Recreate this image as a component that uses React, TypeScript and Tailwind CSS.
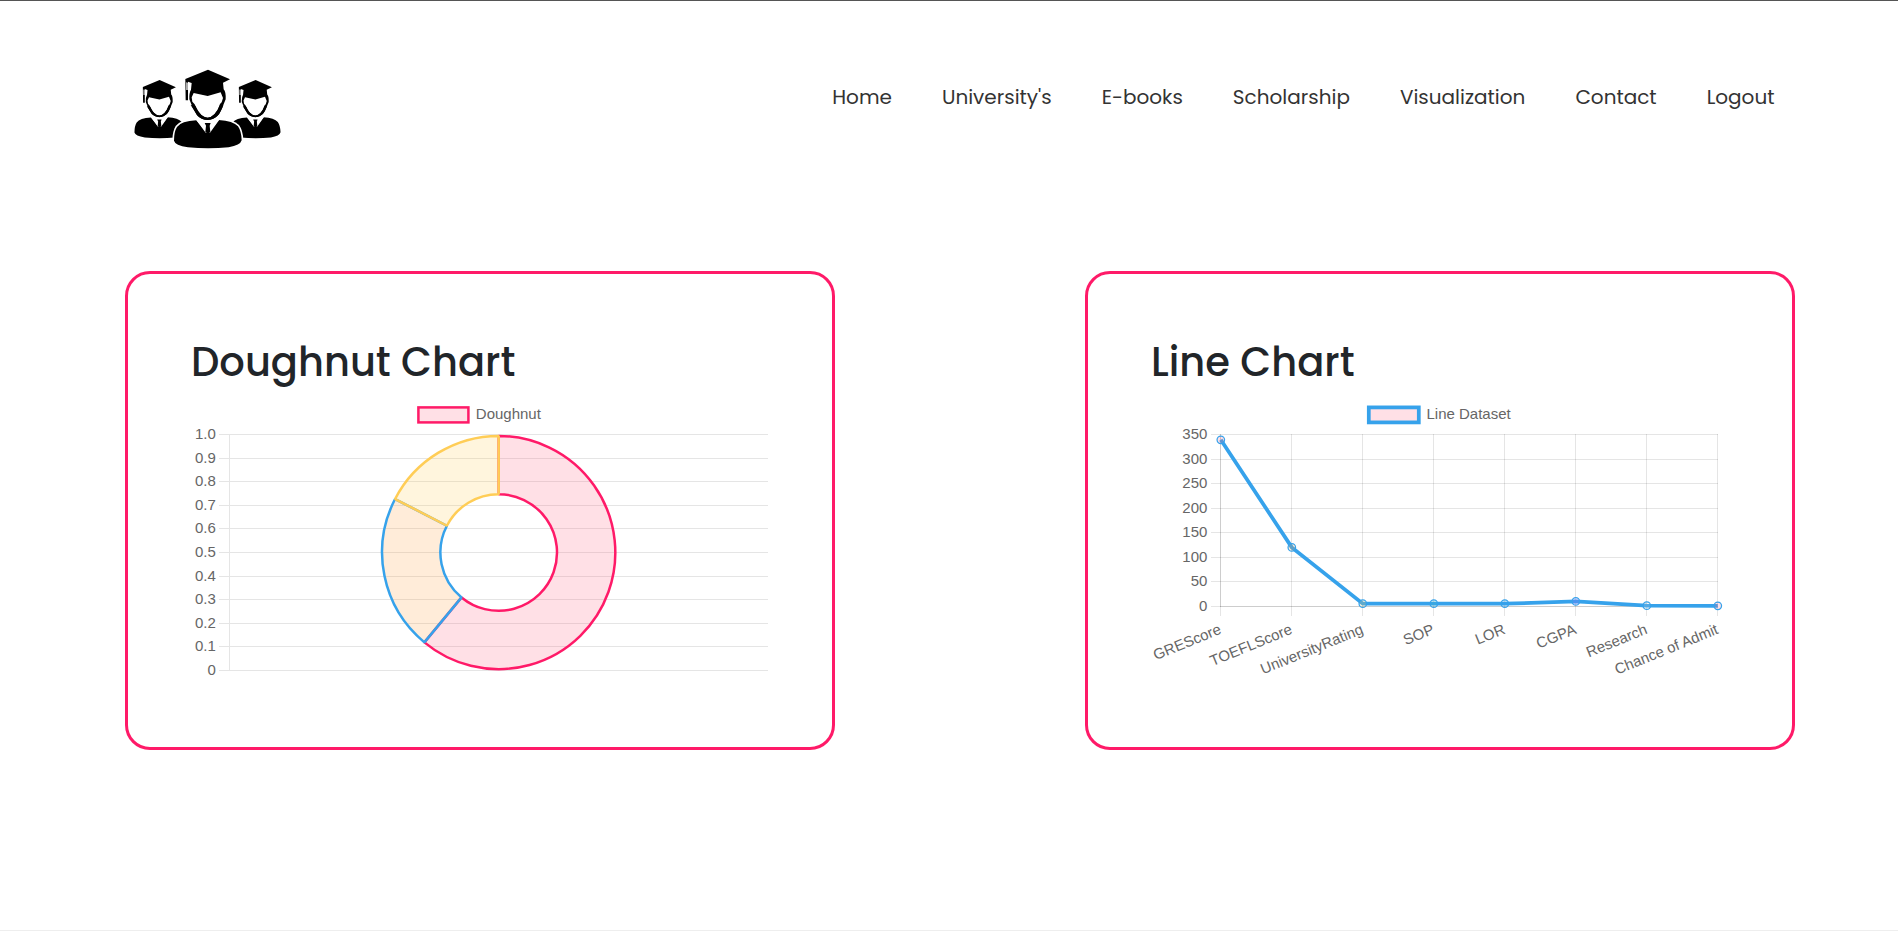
import type { ReactNode } from "react";

const NAV = ["Home", "University's", "E-books", "Scholarship", "Visualization", "Contact", "Logout"];

function Person() {
  return (
    <>
      <path d="M196 72 L264 44 L330 73 L309 83 L311 103 Q318 110 317 133 Q307 160 297 178 Q281 195 263 195 Q245 195 230 179 Q216 157 208 133 Q207 114 213 104 L215 84 L204 80 L204 136 L197 136 Z" />
      <path fill="#fff" d="M221 114 L263 123 L302 112 L309 129 L305 142 L300 147 Q295 166 284 178 Q274 188 263 188 Q249 187 238 175 Q228 162 224 148 L217 140 L215 127 Z M199 82 L203 83 L203 105 L199 105 Z" />
      <path d="M229 196 Q184 198 171 216 Q162 230 162 257 Q165 271 204 277 Q264 283 326 277 Q361 271 365 256 Q364 228 354 214 Q340 198 296 195 L269 231 L271 207 Q272 204 263 204 Q253 204 256 208 L258 231 Z" />
    </>
  );
}

/* Wide shirt opening with a tie, laid over the jacket. */
function Collar() {
  return (
    <>
      <path fill="#fff" d="M229 195 L298 194 L270 233 L257 233 Z" />
      <path d="M212 150 L226 152 Q243 188 263 188 Q284 187 300 150 L310 150 Q303 172 292 183 Q279 195 263 195 Q246 195 233 183 Z" />
      <path d="M254 204 L272 204 L269 212 L271 231 L264 236 L256 231 L258 212 Z" />
    </>
  );
}

function Logo() {
  return (
    <svg width="180" height="105" viewBox="0 0 540 315" className="block" role="img" aria-label="Graduates">
      <g transform="translate(-76.5 42.5) scale(.74)">
        <Person />
        <Collar />
      </g>
      <g transform="translate(211.5 42.5) scale(.74)">
        <Person />
        <Collar />
      </g>
      <path
        fill="#fff"
        d="M224 191 Q180 194 167 213 Q157 230 157 257 Q160 275 204 282 Q264 287 326 282 Q367 275 370 256 Q369 226 357 210 Q340 192 296 191 Z"
      />
      <Person />
      <Collar />
    </svg>
  );
}

function Card({ title, children }: { title: string; children: ReactNode }) {
  return (
    <section className="h-[479px] w-[710px] shrink-0 rounded-[25px] border-[3px] border-[#ff1a68] px-16 pt-16">
      <h2 className="-ml-px h-[62px] whitespace-nowrap text-[40px] leading-[48px] font-medium text-[#212529]">{title}</h2>
      {children}
    </section>
  );
}

const D_ROWS = [434.5, 458.5, 481.5, 505.5, 528.5, 552.5, 576.5, 599.5, 623.5, 646.5, 670.5];
const D_LABELS = ["1.0", "0.9", "0.8", "0.7", "0.6", "0.5", "0.4", "0.3", "0.2", "0.1", "0"];
const CX = 498.7;
const CY = 552.5;

function ring(from: number, to: number) {
  const at = (deg: number, r: number) => {
    const a = (deg * Math.PI) / 180;
    return `${(CX + r * Math.sin(a)).toFixed(2)} ${(CY - r * Math.cos(a)).toFixed(2)}`;
  };
  const large = to - from > 180 ? 1 : 0;
  return `M${at(from, 116.6)} A116.6 116.6 0 ${large} 1 ${at(to, 116.6)} L${at(to, 58.3)} A58.3 58.3 0 ${large} 0 ${at(from, 58.3)} Z`;
}

const SLICES = [
  { from: 0, to: 219.6, fill: "rgba(255,99,132,.2)", stroke: "rgb(255,26,104)" },
  { from: 219.6, to: 297.3, fill: "rgba(255,159,64,.2)", stroke: "rgb(54,162,235)" },
  { from: 297.3, to: 360, fill: "rgba(255,205,86,.2)", stroke: "rgb(255,205,86)" },
];

const CHART_TEXT = "block overflow-visible font-['Liberation_Sans',Arial,sans-serif] text-[15px]";

function DoughnutChart() {
  return (
    <svg width="576" height="288" viewBox="192 400 576 288" className={CHART_TEXT}>
      <rect x="418.4" y="407.4" width="50" height="15" fill="rgba(255,99,132,.2)" stroke="rgb(255,26,104)" strokeWidth="2.5" />
      <text x="475.8" y="419" fill="#666">Doughnut</text>
      <g stroke="#e5e5e5">
        {D_ROWS.map((y) => (
          <path key={y} d={`M219 ${y}H768`} />
        ))}
        <path d="M229.5 434V671" />
      </g>
      <g fill="#666" textAnchor="end">
        {D_ROWS.map((y, i) => (
          <text key={y} x="215.8" y={y + 4.4}>{D_LABELS[i]}</text>
        ))}
      </g>
      {SLICES.map((s) => (
        <path key={s.from} d={ring(s.from, s.to)} fill={s.fill} stroke={s.stroke} strokeWidth="2.5" strokeLinejoin="bevel" />
      ))}
    </svg>
  );
}

const L_ROWS = [434.5, 459.5, 483.5, 508.5, 532.5, 557.5, 581.5, 606.5];
const L_LABELS = ["350", "300", "250", "200", "150", "100", "50", "0"];
const POINTS = [
  { x: 1220.8, y: 439.8, label: "GREScore", fill: "rgba(255,99,132,.2)" },
  { x: 1291.8, y: 547.4, label: "TOEFLScore", fill: "rgba(255,159,64,.2)" },
  { x: 1362.8, y: 603.7, label: "UniversityRating", fill: "rgba(255,205,86,.2)" },
  { x: 1433.8, y: 603.7, label: "SOP", fill: "rgba(75,192,192,.2)" },
  { x: 1504.8, y: 603.7, label: "LOR", fill: "rgba(54,162,235,.2)" },
  { x: 1575.8, y: 601.4, label: "CGPA", fill: "rgba(153,102,255,.2)" },
  { x: 1646.8, y: 605.7, label: "Research", fill: "rgba(201,203,207,.2)" },
  { x: 1717.8, y: 605.8, label: "Chance of Admit", fill: "rgba(255,99,132,.2)" },
];

function LineChart() {
  return (
    <svg width="576" height="288" viewBox="1152 400 576 288" className={CHART_TEXT}>
      <rect x="1368.8" y="407.4" width="50" height="15" fill="rgba(255,99,132,.2)" stroke="rgb(54,162,235)" strokeWidth="3.75" />
      <text x="1426.5" y="419" fill="#666">Line Dataset</text>
      <g stroke="rgba(0,0,0,.1)">
        {L_ROWS.map((y) => (
          <path key={y} d={`M1211 ${y}H1718`} />
        ))}
        {POINTS.map((p) => (
          <path key={p.x} d={`M${Math.floor(p.x) + 0.5} 434V616`} />
        ))}
        <path d="M1220.5 434V607M1220 606.5H1718" />
      </g>
      <g fill="#666" textAnchor="end">
        {L_ROWS.map((y, i) => (
          <text key={y} x="1207.4" y={y + 4.4}>{L_LABELS[i]}</text>
        ))}
        {POINTS.map((p) => (
          <text key={p.label} transform={`translate(${p.x + 1.4} 633.2) rotate(-22.2)`}>{p.label}</text>
        ))}
      </g>
      <polyline points={POINTS.map((p) => `${p.x},${p.y}`).join(" ")} fill="none" stroke="rgb(54,162,235)" strokeWidth="3.75" />
      {POINTS.map((p) => (
        <circle key={p.label} cx={p.x} cy={p.y} r="3.75" fill={p.fill} stroke="rgb(54,162,235)" strokeWidth="1.25" />
      ))}
    </svg>
  );
}

export default function App() {
  return (
    <div className="flex h-[931px] w-[1898px] flex-col overflow-hidden border-t border-b border-t-[#555] border-b-[#eee] bg-white font-[Poppins,Inter,sans-serif]">
      <header className="flex h-[270px] shrink-0 items-start justify-between pt-[54px] pr-[123.5px] pl-[120px]">
        <Logo />
        <nav className="flex gap-[50px] pt-[27px]">
          {NAV.map((label) => (
            <a key={label} href="#" className="block whitespace-nowrap text-[20px] leading-[30px] font-normal text-[#333]">
              {label}
            </a>
          ))}
        </nav>
      </header>
      <main className="flex gap-[250px] pl-[125px]">
        <Card title="Doughnut Chart">
          <DoughnutChart />
        </Card>
        <Card title="Line Chart">
          <LineChart />
        </Card>
      </main>
    </div>
  );
}
